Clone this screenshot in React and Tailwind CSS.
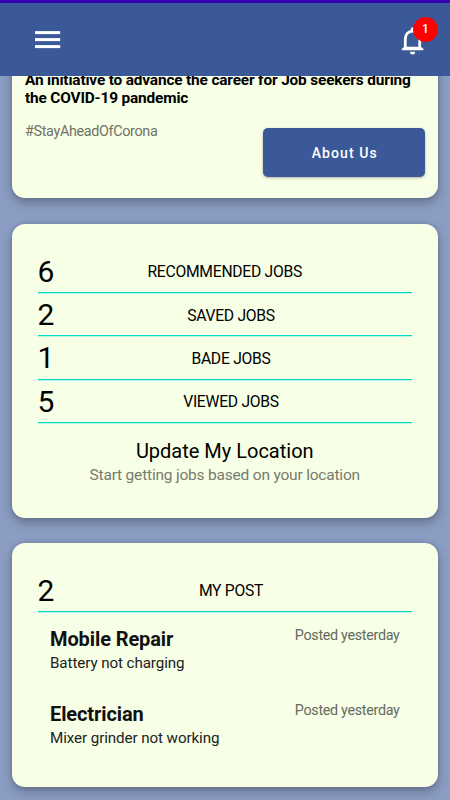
import React from 'react';

const stats = [
  { count: 6, label: 'RECOMMENDED JOBS' },
  { count: 2, label: 'SAVED JOBS', inset: true },
  { count: 1, label: 'BADE JOBS', inset: true },
  { count: 5, label: 'VIEWED JOBS', inset: true }
];

const posts = [
  { title: 'Mobile Repair', description: 'Battery not charging', date: 'Posted yesterday' },
  { title: 'Electrician', description: 'Mixer grinder not working', date: 'Posted yesterday' }
];

const Card = ({ className, children }) => (
  <section
    className={`mr-[12.5px] ml-[12px] shrink-0 bg-[#f7ffe6] shadow-[0_5px_11px_rgba(0,0,0,0.25),0_0_4px_rgba(0,0,0,0.16)] ${className}`}
  >
    {children}
  </section>
);

const StatRow = ({ count, label, inset }) => (
  <div className="relative flex h-[43.2px] items-center border-b border-[#03dac5] pt-[2px] shadow-[0_1px_0_rgba(3,218,197,0.25)]">
    <span className="absolute left-0 text-[30px] leading-none tracking-tight">{count}</span>
    <span className={`w-full text-center text-[15.7px] tracking-[-0.28px] ${inset ? 'pl-[12.5px]' : ''}`}>
      {label}
    </span>
  </div>
);

const Header = () => (
  <header className="relative z-10 flex h-[76px] shrink-0 items-center justify-between border-t-[3px] border-[#3700b3] bg-[#3b5998] pr-[23px] pl-[35px]">
    <button aria-label="Menu">
      <svg width="26" height="19" viewBox="0 0 26 19" fill="#fff">
        <rect y="1.1" width="25.2" height="3" />
        <rect y="8.1" width="25.2" height="3" />
        <rect y="15.1" width="25.2" height="3" />
      </svg>
    </button>
    <button aria-label="Notifications" className="relative">
      <svg width="28" height="32" viewBox="0 0 28 32" fill="none">
        <path
          d="M6.3 24.5V15c0-4.6 2.8-7.8 7.2-7.8s7.2 3.2 7.2 7.8v9.5"
          stroke="#fff"
          strokeWidth="2.8"
        />
        <path d="M11.8 7V5.2a1.9 1.9 0 0 1 3.8 0V7z" fill="#fff" />
        <path d="M2.8 26.2v-1.4l2.6-2h16.4l2.6 2v1.4z" fill="#fff" />
        <path d="M11 27.8h5.2a2.6 2.6 0 0 1-5.2 0z" fill="#fff" />
      </svg>
      <span className="absolute -top-[7px] left-[14px] flex size-[25px] items-center justify-center rounded-full bg-[#ff0000] text-[12px] font-medium text-white">
        1
      </span>
    </button>
  </header>
);

export default function App() {
  return (
    <div className="flex h-[800px] w-[450px] flex-col overflow-hidden bg-[#8b9dc3] font-[Roboto,sans-serif] text-black">
      <Header />

      <main className="-mt-[10px] flex flex-col">
        {/* Intro */}
        <Card className="h-[132px] rounded-b-[13px] pt-[5px] pr-[12.5px] pl-[13px]">
          <h1 className="text-[15.4px] leading-[18px] font-bold tracking-[-0.16px] whitespace-nowrap">
            An initiative to advance the career for Job seekers during
            <br />
            the COVID-19 pandemic
          </h1>
          <div className="flex justify-between">
            <p className="mt-[15px] text-[14.4px] leading-5 tracking-[-0.35px] text-[#6f7367]">#StayAheadOfCorona</p>
            <button className="mt-[21px] h-[49px] w-[162.5px] rounded-[5px] bg-[#3b5998] pt-[2px] pl-[2px] text-[14px] font-medium tracking-[1.1px] text-white shadow-[0_1px_3px_rgba(0,0,0,0.3)]">
              About Us
            </button>
          </div>
        </Card>

        {/* Job counters */}
        <Card className="mt-[26px] h-[293.5px] rounded-[13px] px-[25.5px] pt-[26px]">
          {stats.map((item) => (
            <StatRow key={item.label} {...item} />
          ))}
          <div className="mt-[15.5px] text-center">
            <h2 className="text-[20px] leading-[26px]">Update My Location</h2>
            <p className="text-[15.5px] leading-[22px] tracking-[-0.2px] text-[#777b6f]">
              Start getting jobs based on your location
            </p>
          </div>
        </Card>

        {/* My posts */}
        <Card className="mt-[25.5px] h-[244px] rounded-[13px] px-[25.5px] pt-[26px]">
          <StatRow count={2} label="MY POST" inset />
          <ul className="px-[12.5px] pt-[14px]">
            {posts.map((post) => (
              <li key={post.title} className="flex h-[75px] justify-between">
                <div>
                  <h3 className="text-[20px] leading-[26px] font-bold tracking-[-0.1px] text-[#111]">{post.title}</h3>
                  <p className="text-[15.2px] leading-[23px] tracking-[-0.1px] text-[#222]">{post.description}</p>
                </div>
                <span className="text-[14.3px] leading-[18px] tracking-[-0.3px] text-[#666a5f]">{post.date}</span>
              </li>
            ))}
          </ul>
        </Card>
      </main>
    </div>
  );
}
